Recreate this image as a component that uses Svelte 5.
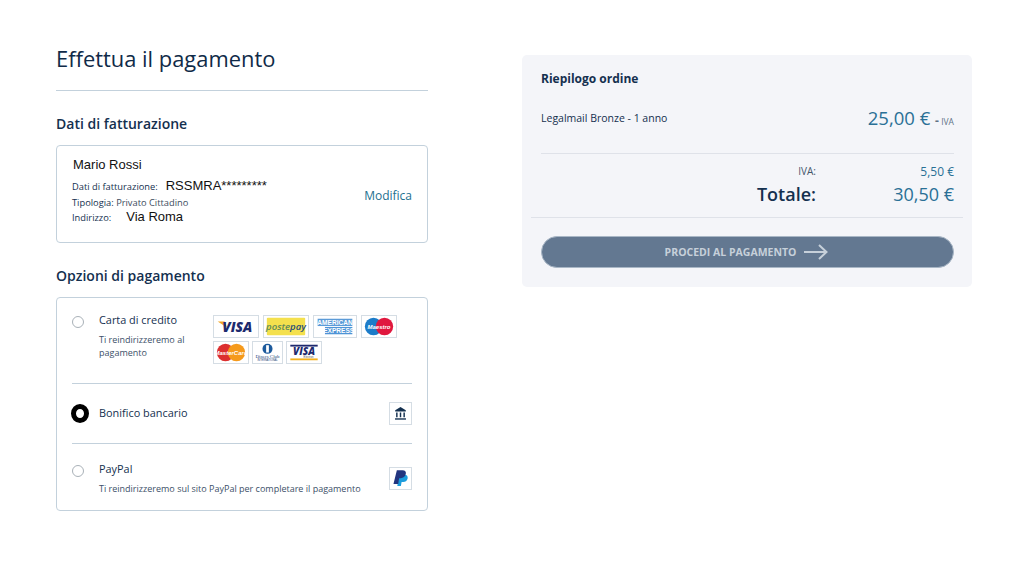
<script>
    const methods = [
        { id: 'card', name: 'Carta di credito', note: 'Ti reindirizzeremo al pagamento' },
        { id: 'bank', name: 'Bonifico bancario' },
        { id: 'paypal', name: 'PayPal', note: 'Ti reindirizzeremo sul sito PayPal per completare il pagamento' }
    ];
    let selected = 'bank';
</script>

<div class="page">
    <div class="left">
        <h1>Effettua il pagamento</h1>

        <h2 class="billing-title">Dati di fatturazione</h2>
        <div class="box billing">
            <div class="billing-info">
                <div class="name">Mario Rossi</div>
                <div class="row row-cf"><span>Dati di fatturazione:</span><b class="cf">RSSMRA*********</b></div>
                <div class="row row-type"><span>Tipologia:</span> <span class="soft">Privato Cittadino</span></div>
                <div class="row row-addr"><span>Indirizzo:</span><b class="addr">Via Roma</b></div>
            </div>
            <a class="edit" href="#top">Modifica</a>
        </div>

        <h2 class="options-title">Opzioni di pagamento</h2>
        <div class="box options">
            {#each methods as m}
                <div class="method {m.id}">
                    <button class="radio" class:on={selected === m.id} aria-label={m.name} on:click={() => (selected = m.id)}></button>
                    <div class="method-text">
                        <div class="method-name">{m.name}</div>
                        {#if m.note}<div class="method-note">{m.note}</div>{/if}
                    </div>

                    {#if m.id === 'card'}
                        <div class="logos">
                            <svg class="logo" width="46" height="23" viewBox="0 0 46 23">
                                <path d="M3 6h7.5l2.5 6.5z" fill="#f2a41f" />
                                <text x="24.5" y="18" text-anchor="middle" class="visa-big">VISA</text>
                            </svg>
                            <svg class="logo" width="46" height="23" viewBox="0 0 46 23">
                                <rect x="2" y="2" width="42" height="19" rx="1" fill="#f4e04d" />
                                <text x="23" y="15" text-anchor="middle" class="poste">poste<tspan fill="#1f4d7a">pay</tspan></text>
                            </svg>
                            <svg class="logo" width="44" height="23" viewBox="0 0 44 23">
                                <rect x="3" y="3" width="38" height="8" fill="#5b9bd8" />
                                <rect x="11" y="12" width="30" height="8" fill="#4f94d6" />
                                <text x="22" y="9.8" text-anchor="middle" class="amex">AMERICAN</text>
                                <text x="26" y="18.8" text-anchor="middle" class="amex">EXPRESS</text>
                            </svg>
                            <svg class="logo" width="36" height="23" viewBox="0 0 36 23">
                                <circle cx="12" cy="11.5" r="9.5" fill="#1c7cc9" />
                                <circle cx="24" cy="11.5" r="9.5" fill="#e0183f" />
                                <text x="18" y="14" text-anchor="middle" class="card-word">Maestro</text>
                            </svg>
                            <svg class="logo" width="36" height="23" viewBox="0 0 36 23">
                                <circle cx="12" cy="11.5" r="9.5" fill="#dc2f2f" />
                                <circle cx="24" cy="11.5" r="9.5" fill="#f59a1c" />
                                <text x="18" y="14" text-anchor="middle" class="card-word">MasterCard</text>
                            </svg>
                            <svg class="logo tight" width="31" height="23" viewBox="0 0 31 23">
                                <circle cx="15.5" cy="7.5" r="5.5" fill="#1c5a9c" />
                                <rect x="14" y="3.5" width="3" height="8" fill="#fff" />
                                <text x="15.5" y="17.5" text-anchor="middle" class="diners">Diners Club</text>
                                <text x="15.5" y="21" text-anchor="middle" class="diners-sub">INTERNATIONAL</text>
                            </svg>
                            <svg class="logo tight" width="36" height="23" viewBox="0 0 36 23">
                                <rect x="3" y="3" width="30" height="2" fill="#1f2a6e" />
                                <rect x="3" y="18" width="30" height="2" fill="#f2b01e" />
                                <text x="18" y="14" text-anchor="middle" class="visa-small">VISA</text>
                                <text x="23" y="17.3" text-anchor="middle" class="electron">Electron</text>
                            </svg>
                        </div>
                    {:else if m.id === 'bank'}
                        <svg class="logo tile" width="23" height="23" viewBox="0 0 23 23">
                            <path d="M11.5 4.5l5.8 3.4v1.3H5.700v-1.300z" fill="#14304f" />
                            <path d="M7.500 10.500v5M11.500 10.500v5M15.500 10.500v5" stroke="#14304f" stroke-width="1.600" fill="none" />
                            <path d="M5.500 17.500h12" stroke="#14304f" stroke-width="1.500" />
                        </svg>
                    {:else}
                        <svg class="logo tile" width="23" height="23" viewBox="0 0 23 23">
                            <path d="M10 7.500h6c2.500 0 3.800 1.700 3.300 3.900-.6 2.600-2.500 3.900-4.800 3.900h-1.800l-.8 4.300H8z" fill="#1b9cdc" />
                            <path d="M7.500 2.500h6.200c2.900 0 4.200 1.700 3.600 4.200-.7 3-2.800 4.500-5.500 4.500H10l-1 6.300H3.800z" fill="#22357f" />
                        </svg>
                    {/if}
                </div>
            {/each}
        </div>
    </div>

    <aside class="summary">
        <h3>Riepilogo ordine</h3>
        <div class="product">
            <span class="product-name">Legalmail Bronze - 1 anno</span>
            <span class="product-price">25,00 € <small><b>-</b> IVA</small></span>
        </div>
        <div class="totals">
            <div class="total-row vat"><span>IVA:</span><span class="value">5,50 €</span></div>
            <div class="total-row grand"><span>Totale:</span><span class="value">30,50 €</span></div>
        </div>
        <div class="action">
            <button class="pay">
                PROCEDI AL PAGAMENTO
                <svg width="24" height="16" viewBox="0 0 24 16" fill="none" stroke="currentColor" stroke-width="2">
                    <path d="M0 8h22.500M15 1l7.500 7-7.500 7" />
                </svg>
            </button>
        </div>
    </aside>
</div>

<style>
:global(body) {
    background: #ffffff;
}

.page {
    display: flex;
    align-items: flex-start;
    gap: 94px;
    padding: 0 49px 0 56px;
    font-family: "Open Sans", "Noto Sans", sans-serif;
    color: #14304f;
}

.left {
    width: 372px;
}

h1 {
    margin: 0;
    padding: 42px 0 15px;
    height: 33px;
    font-size: 21.9px;
    line-height: 33px;
    font-weight: 400;
    color: #0f2a48;
    border-bottom: 1px solid #c3d1dc;
}

h2 {
    margin: 0;
    font-size: 14px;
    line-height: 20px;
    font-weight: 600;
    color: #14304f;
}

.billing-title {
    margin-top: 23px;
}

.options-title {
    margin-top: 23px;
}

.box {
    border: 1px solid #c3d1dc;
    border-radius: 4px;
    box-sizing: border-box;
}

/* Billing card */
.billing {
    margin-top: 11px;
    height: 98px;
    padding: 10px 15px 0 15px;
    display: flex;
    justify-content: space-between;
}

.name {
    padding-left: 1px;
    font-family: "Liberation Sans", Arial, sans-serif;
    font-size: 13px;
    line-height: 18px;
    color: #111;
}

.row {
    font-size: 9.3px;
    color: #14304f;
    line-height: 14px;
}

.row-cf {
    margin-top: 5px;
}

.row-type {
    margin-top: 2px;
}

.soft {
    color: #3c4c5e;
}

.cf, .addr {
    font-family: "Liberation Sans", Arial, sans-serif;
    font-weight: 400;
    font-size: 13px;
    color: #111;
}

.cf {
    margin-left: 8px;
}

.addr {
    margin-left: 15px;
}

.edit {
    align-self: center;
    margin-top: -8px;
    font-size: 12px;
    font-weight: 400;
    color: #24708f;
    text-decoration: none;
}

/* Payment options */
.options {
    margin-top: 11px;
    height: 214px;
    padding: 0 15px;
}

.method {
    position: relative;
    display: flex;
    align-items: flex-start;
    border-bottom: 1px solid #c3d1dc;
    box-sizing: border-box;
}

.method:last-child {
    border-bottom: none;
}

.method.card {
    height: 86px;
    padding-top: 15px;
}

.method.bank {
    height: 60px;
    align-items: center;
}

.method.paypal {
    height: 66px;
    padding-top: 18px;
}

.radio {
    flex: none;
    width: 12px;
    height: 12px;
    margin: 3px 15px 0 0;
    padding: 0;
    border: 1px solid #a9b1b8;
    border-radius: 50%;
    background: #fff;
    box-sizing: border-box;
}

.radio.on {
    width: 18px;
    height: 19px;
    margin: 0 10px 0 -1px;
    border: 5px solid #000;
}

.method-text {
    flex: 1;
    min-width: 0;
}

.card .method-text {
    flex: none;
    width: 114px;
}

.method-name {
    font-size: 10.9px;
    line-height: 14px;
    color: #14304f;
}

.method-note {
    margin-top: 6px;
    font-size: 9px;
    line-height: 13px;
    color: #3c5068;
}

.bank .method-text {
    margin-top: -1px;
}

.logos {
    width: 190px;
    display: flex;
    flex-wrap: wrap;
    gap: 3px 4px;
    margin-top: 2px;
}

.logo {
    display: block;
    flex: none;
    box-sizing: border-box;
    border: 1px solid #d5dde4;
    background: #fff;
}

.logo.tight {
    margin-left: -1px;
}

.tile {
    margin-left: 8px;
}

.bank .tile {
    margin-top: -1px;
}

.paypal .tile {
    margin-top: 5px;
}

.visa-big {
    font: italic 800 15px "Open Sans", sans-serif;
    fill: #1c2a6e;
}

.poste {
    font: italic 600 10.5px "Open Sans", sans-serif;
    fill: #5f8a5a;
}

.amex {
    font: 700 7.2px "Liberation Sans", sans-serif;
    fill: #fff;
}

.card-word {
    font: italic 700 6.6px "Liberation Sans", sans-serif;
    fill: #fff;
}

.diners {
    font: 5.4px "Liberation Serif", serif;
    fill: #1c3f73;
}

.diners-sub {
    font: 2.800px "Liberation Sans", sans-serif;
    fill: #1c3f73;
}

.visa-small {
    font: italic 800 11px "Open Sans", sans-serif;
    fill: #1c2a6e;
}

.electron {
    font: 3px "Liberation Sans", sans-serif;
    fill: #555;
}

/* Order summary */
.summary {
    width: 450px;
    height: 232px;
    margin-top: 55px;
    padding: 15px 9px 0;
    background: #f4f5f9;
    border-radius: 5px;
    box-sizing: border-box;
}

h3 {
    margin: 0;
    padding-left: 10px;
    font-size: 12px;
    line-height: 18px;
    font-weight: 700;
    color: #14304f;
}

.product {
    margin: 18px 9px 0 10px;
    height: 47px;
    display: flex;
    justify-content: space-between;
    align-items: flex-start;
    border-bottom: 1px solid #dfe2e9;
}

.product-name {
    margin-top: 5px;
    font-size: 10.5px;
    line-height: 14px;
    color: #14304f;
}

.product-price {
    margin-top: -1px;
    font-size: 18.5px;
    line-height: 25px;
    color: #2a7096;
}

.product-price small {
    font-size: 8.5px;
    color: #5f7286;
}

.product-price small b {
    font-size: 12px;
}

.totals {
    height: 64px;
    padding: 9px 9px 0 10px;
    box-sizing: border-box;
    border-bottom: 1px solid #dfe2e9;
}

.total-row {
    display: flex;
    justify-content: flex-end;
}

.total-row span:first-child {
    color: #14304f;
}

.value {
    width: 138px;
    text-align: right;
    color: #2a7096;
}

.vat {
    font-size: 10.5px;
    line-height: 18px;
}

.vat span:first-child {
    margin-top: -1px;
    font-size: 10px;
    color: #44566c;
}

.vat .value {
    font-size: 12px;
}

.grand {
    margin-top: 1px;
    font-size: 18px;
    line-height: 25px;
}

.grand span:first-child {
    font-weight: 600;
}

.action {
    padding: 18px 9px 0 10px;
}

.pay {
    width: 100%;
    height: 32px;
    display: flex;
    align-items: center;
    justify-content: center;
    gap: 8px;
    padding: 0 2px 0 0;
    border: 1px solid #a9b7c6;
    border-radius: 16px;
    background: #637891;
    color: #c6d0da;
    font-family: inherit;
    font-size: 10.5px;
    font-weight: 700;
}
</style>
